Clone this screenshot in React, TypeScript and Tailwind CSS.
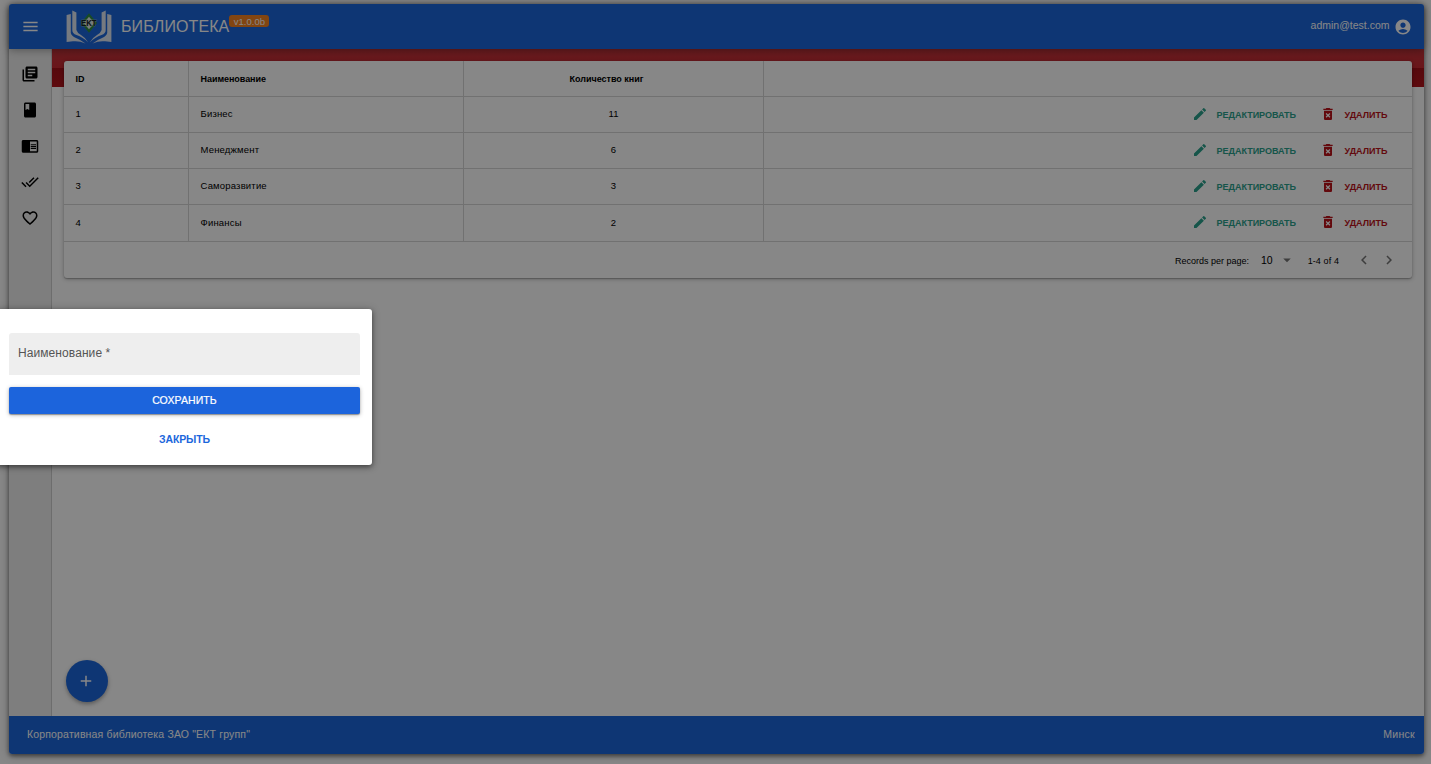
import React from "react";
import {
  MdAccountCircle,
  MdAdd,
  MdArrowDropDown,
  MdBook,
  MdChevronLeft,
  MdChevronRight,
  MdChromeReaderMode,
  MdDeleteForever,
  MdDoneAll,
  MdEdit,
  MdFavoriteBorder,
  MdLibraryBooks,
  MdMenu,
} from "react-icons/md";

const categories = [
  { id: 1, name: "Бизнес", count: 11 },
  { id: 2, name: "Менеджмент", count: 6 },
  { id: 3, name: "Саморазвитие", count: 3 },
  { id: 4, name: "Финансы", count: 2 },
];

const navIcons = [MdLibraryBooks, MdBook, MdChromeReaderMode, MdDoneAll, MdFavoriteBorder];

function Logo() {
  return (
    <svg viewBox="0 0 46 34" className="h-[34px] w-[46px]">
      <g fill="#dfe6f2">
        <path d="M6.3 0.5 L10.4 2.5 V20 Q11 22.5 15 25 Q20 28 22.3 32.5 Q17 27 10.5 25 Q6.3 23.5 6.3 20 Z" />
        <path d="M0.6 5 L4.8 4 V23 Q5.5 26 10 28 Q15 30 19.5 33.5 Q13 30.5 7 31.3 L0.6 32 Z" />
        <path d="M39.7 0.5 L35.6 2.5 V20 Q35 22.5 31 25 Q26 28 23.7 32.5 Q29 27 35.5 25 Q39.7 23.5 39.7 20 Z" />
        <path d="M45.4 5 L41.2 4 V23 Q40.5 26 36 28 Q31 30 26.5 33.5 Q33 30.5 39 31.3 L45.4 32 Z" />
      </g>
      <path d="M23 3.2 L31 13 L23 22.8 L15 13 Z" fill="#2f8f42" />
      <path d="M23 6.8 L28.4 13 L23 19.2 L17.6 13 Z" fill="#e4ece8" />
      <text
        x="22.8"
        y="16"
        textAnchor="middle"
        fontSize="8.4"
        fontWeight="bold"
        fontFamily="Liberation Sans"
        fill="#14202a"
        stroke="#b9cfc8"
        strokeWidth="0.6"
        paintOrder="stroke"
        textLength="15.5"
        lengthAdjust="spacingAndGlyphs"
      >
        EKT
      </text>
    </svg>
  );
}

function Header() {
  return (
    <header className="relative z-10 flex h-[45px] shrink-0 items-center rounded-t-[3px] bg-[#1c67dc] pl-[12px] pr-[12.5px] text-white shadow-[0_1px_8px_rgba(0,0,0,0.35)]">
      <MdMenu className="size-[19px]" />
      <div className="ml-[26px] flex">
        <Logo />
      </div>
      <div className="ml-[9px] flex items-start">
        <span className="whitespace-nowrap text-[16px] leading-[22px] tracking-[0.1px]">БИБЛИОТЕКА</span>
        <span className="-mt-px flex h-[12px] w-[40px] items-center justify-center rounded-[3px] bg-[#f58220] pt-[2px] text-[9.5px] leading-none">
          v1.0.0b
        </span>
      </div>
      <div className="ml-auto flex items-center gap-[4px]">
        <span className="-mt-[3px] text-[10.5px] leading-[14px]">admin@test.com</span>
        <MdAccountCircle className="size-[18px]" />
      </div>
    </header>
  );
}

function Sidebar() {
  return (
    <nav className="flex w-[43px] shrink-0 flex-col items-center border-r border-[#cfcfcf] bg-[#eeeeee] pt-[7px] text-black">
      {navIcons.map((Icon, i) => (
        <div key={i} className="flex h-[36px] items-center">
          <Icon className="size-[18px]" />
        </div>
      ))}
    </nav>
  );
}

function Table() {
  return (
    <section className="rounded-[3px] bg-white text-[9.5px] tracking-[0.18px] text-black shadow-[0_1px_4px_rgba(0,0,0,0.3),0_1px_1px_rgba(0,0,0,0.2)]">
      <div className="grid h-[36px] grid-cols-[125px_275px_300px_1fr] border-b border-[#d6d6d6] text-[9px] font-bold tracking-[-0.05px]">
        <div className="flex items-center border-r border-[#d6d6d6] pl-[11.5px] pt-[2px]">ID</div>
        <div className="flex items-center border-r border-[#d6d6d6] pl-[11.5px] pt-[2px]">Наименование</div>
        <div className="flex items-center justify-center border-r border-[#d6d6d6] pr-[14px] pt-[2px] tracking-normal">
          Количество книг
        </div>
        <div />
      </div>
      {categories.map((c) => (
        <div
          key={c.id}
          className="grid h-[36px] grid-cols-[125px_275px_300px_1fr] border-b border-[#d6d6d6] [&:nth-child(5)]:h-[37px]"
        >
          <div className="flex items-center border-r border-[#d6d6d6] pl-[11.5px]">{c.id}</div>
          <div className="flex items-center border-r border-[#d6d6d6] pl-[11.5px]">{c.name}</div>
          <div className="flex items-center justify-center border-r border-[#d6d6d6]">{c.count}</div>
          <div className="flex h-[34px] items-center justify-end pr-[23.5px] text-[9px] font-bold tracking-normal">
            <button className="flex items-center text-[#2ba18c]">
              <MdEdit className="mr-[8.5px] size-[16px]" />
              <span className="w-[80px] whitespace-nowrap pt-[3px] text-left">РЕДАКТИРОВАТЬ</span>
            </button>
            <button className="ml-[23.5px] flex items-center text-[#bb1119]">
              <MdDeleteForever className="mr-[8.5px] size-[16px]" />
              <span className="w-[44px] whitespace-nowrap pt-[3px] text-left">УДАЛИТЬ</span>
            </button>
          </div>
        </div>
      ))}
      <div className="flex h-[36px] items-center justify-end pr-[14px] text-[9px] tracking-normal">
        <span className="pt-[3px]">Records per page:</span>
        <span className="ml-3 pt-[2px] text-[10.5px]">10</span>
        <MdArrowDropDown className="ml-[5px] size-[18px] text-[#757575]" />
        <span className="ml-[12px] pt-[3px] tracking-[0.1px]">1-4 of 4</span>
        <MdChevronLeft className="ml-[16px] size-[18px] text-[#757575]" />
        <MdChevronRight className="ml-[7px] size-[18px] text-[#757575]" />
      </div>
    </section>
  );
}

function CategoryDialog() {
  return (
    <div className="absolute left-[-3px] top-[309px] flex h-[156px] w-[375px] flex-col rounded-[3px] bg-white pl-3 pr-3 pt-6 shadow-[0_2px_5px_rgba(0,0,0,0.4),0_1px_8px_rgba(0,0,0,0.25)]">
      <label className="flex h-[42px] items-center rounded-t-[3px] bg-[#eeeeee] pb-[3px] pl-[9px] text-[12px] tracking-[0.08px] text-[#555555]">
        Наименование *
      </label>
      <button className="mt-3 h-[27px] rounded-[2px] bg-[#1c64dc] text-[10.5px] tracking-[0.1px] text-white shadow-[0_1px_4px_rgba(0,0,0,0.3),0_1px_1px_rgba(0,0,0,0.3)] [-webkit-text-stroke:0.2px_white]">
        СОХРАНИТЬ
      </button>
      <button className="mt-3 h-[27px] text-[10.5px] font-bold tracking-[-0.1px] text-[#1c67dc]">ЗАКРЫТЬ</button>
    </div>
  );
}

export default function App() {
  return (
    <div className="relative h-[764px] w-[1431px] overflow-hidden bg-white px-[9px] pb-[10px] pt-1 font-['Liberation_Sans',sans-serif]">
      <div className="flex h-[750px] w-[1415px] flex-col rounded-[3px] bg-white shadow-[0_2px_4px_rgba(0,0,0,0.45),0_1px_10px_rgba(0,0,0,0.3)]">
        <Header />
        <div className="flex min-h-0 flex-1">
          <Sidebar />
          <main className="relative flex-1 bg-[linear-gradient(#c2343a_0,#c82a32_19px,#a31018_19px,#b2141c_38px,#ffffff_38px)] p-3">
            <Table />
            <button className="absolute bottom-[14px] left-[14px] flex size-[42px] items-center justify-center rounded-full bg-[#1c67dc] pr-[2px] text-white shadow-[0_2px_4px_rgba(0,0,0,0.35)]">
              <MdAdd className="size-[18px]" />
            </button>
          </main>
        </div>
        <footer className="flex h-[38px] shrink-0 items-center justify-between rounded-b-[3px] bg-[#1c67dc] pl-[18px] pr-[9px] text-[10.5px] tracking-[0.16px] text-white">
          <span>Корпоративная библиотека ЗАО "ЕКТ групп"</span>
          <span className="tracking-[0.3px]">Минск</span>
        </footer>
      </div>
      <div className="absolute inset-0 z-20 bg-black/47">
        <CategoryDialog />
      </div>
    </div>
  );
}
